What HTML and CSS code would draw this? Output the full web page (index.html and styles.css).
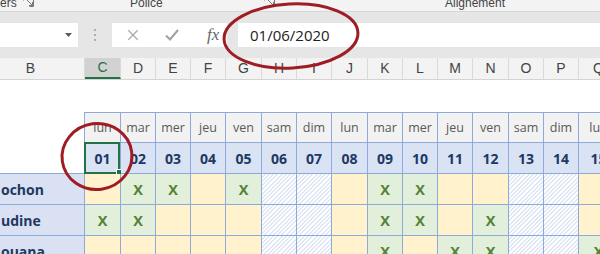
FILE: index.html
```html
<!DOCTYPE html>
<html lang="fr">
<head>
    <meta charset="UTF-8">
    <meta name="viewport" content="width=device-width, initial-scale=1.0">
    <title>Planning - juin 2020</title>
    <link rel="stylesheet" href="styles.css">
</head>
<body>

    <div class="ribbon">
        <span class="rb-label rb-first">ers</span>
        <svg class="launcher" viewBox="0 0 13 13"><path d="M1.5 5.5v-4h10v10h-4M5 5l5.5 5.5M10.5 7v3.5H7" fill="none" stroke="#777" stroke-width="1"/></svg>
        <span class="rb-label rb-police">Police</span>
        <svg class="launcher launcher-2" viewBox="0 0 13 13"><path d="M1.5 5.5v-4h10v10h-4M5 5l5.5 5.5M10.5 7v3.5H7" fill="none" stroke="#777" stroke-width="1"/></svg>
        <span class="rb-label rb-align">Alignement</span>
    </div>

    <div class="formula-bar">
        <div class="name-box">
            <svg class="drop" viewBox="0 0 7 4"><path d="M0 0h7L3.5 4z" fill="#5a5a5a"/></svg>
        </div>
        <div class="grip">
            <span></span><span></span><span></span>
        </div>
        <div class="fx-buttons">
            <svg class="btn-cancel" viewBox="0 0 14 14"><path d="M1.5 1.5l11 11M12.5 1.5l-11 11" stroke="#a8a8a8" stroke-width="1.4" fill="none"/></svg>
            <svg class="btn-enter" viewBox="0 0 14 14"><path d="M1 7.5l4 4L13 2" stroke="#a0a0a0" stroke-width="2" fill="none"/></svg>
            <span class="fx">fx</span>
        </div>
        <div class="formula-input">01/06/2020</div>
    </div>

    <div class="col-heads">
        <div class="col-head col-b">B</div>
        <div class="col-head active">C</div>
        <div class="col-head">D</div>
        <div class="col-head">E</div>
        <div class="col-head">F</div>
        <div class="col-head">G</div>
        <div class="col-head">H</div>
        <div class="col-head">I</div>
        <div class="col-head">J</div>
        <div class="col-head">K</div>
        <div class="col-head">L</div>
        <div class="col-head">M</div>
        <div class="col-head">N</div>
        <div class="col-head">O</div>
        <div class="col-head">P</div>
        <div class="col-head">Q</div>
    </div>

    <div class="sheet">
        <div class="planning">
            <!-- jours -->
            <div class="cell blank"></div>
            <div class="cell day top">lun</div>
            <div class="cell day top">mar</div>
            <div class="cell day top">mer</div>
            <div class="cell day top">jeu</div>
            <div class="cell day top">ven</div>
            <div class="cell day top">sam</div>
            <div class="cell day top">dim</div>
            <div class="cell day top">lun</div>
            <div class="cell day top">mar</div>
            <div class="cell day top">mer</div>
            <div class="cell day top">jeu</div>
            <div class="cell day top">ven</div>
            <div class="cell day top">sam</div>
            <div class="cell day top">dim</div>
            <div class="cell day top">lun</div>

            <!-- dates -->
            <div class="cell blank base"></div>
            <div class="cell num sel">01<span class="handle"></span></div>
            <div class="cell num">02</div>
            <div class="cell num">03</div>
            <div class="cell num">04</div>
            <div class="cell num">05</div>
            <div class="cell num">06</div>
            <div class="cell num">07</div>
            <div class="cell num">08</div>
            <div class="cell num">09</div>
            <div class="cell num">10</div>
            <div class="cell num">11</div>
            <div class="cell num">12</div>
            <div class="cell num">13</div>
            <div class="cell num">14</div>
            <div class="cell num">15</div>

            <div class="cell name">ochon</div>
            <div class="cell no"></div>
            <div class="cell yes">X</div>
            <div class="cell yes">X</div>
            <div class="cell no"></div>
            <div class="cell yes">X</div>
            <div class="cell off"></div>
            <div class="cell off"></div>
            <div class="cell no"></div>
            <div class="cell yes">X</div>
            <div class="cell yes">X</div>
            <div class="cell no"></div>
            <div class="cell no"></div>
            <div class="cell off"></div>
            <div class="cell off"></div>
            <div class="cell no"></div>

            <div class="cell name">udine</div>
            <div class="cell yes">X</div>
            <div class="cell yes">X</div>
            <div class="cell no"></div>
            <div class="cell no"></div>
            <div class="cell no"></div>
            <div class="cell off"></div>
            <div class="cell off"></div>
            <div class="cell no"></div>
            <div class="cell yes">X</div>
            <div class="cell yes">X</div>
            <div class="cell no"></div>
            <div class="cell yes">X</div>
            <div class="cell off"></div>
            <div class="cell off"></div>
            <div class="cell no"></div>

            <div class="cell name">ouana</div>
            <div class="cell no"></div>
            <div class="cell no"></div>
            <div class="cell no"></div>
            <div class="cell no"></div>
            <div class="cell no"></div>
            <div class="cell off"></div>
            <div class="cell off"></div>
            <div class="cell no"></div>
            <div class="cell yes">X</div>
            <div class="cell no"></div>
            <div class="cell yes">X</div>
            <div class="cell yes">X</div>
            <div class="cell off"></div>
            <div class="cell off"></div>
            <div class="cell yes">X</div>
        </div>
    </div>

    <!-- annotations rouges -->
    <svg class="marks" viewBox="0 0 600 254">
        <ellipse cx="291" cy="36" rx="67" ry="32" transform="rotate(-3 291 36)" fill="none" stroke="#9e1d24" stroke-width="3"/>
        <ellipse cx="97" cy="156.5" rx="35" ry="33" transform="rotate(-8 97 156.5)" fill="none" stroke="#9e1d24" stroke-width="3"/>
    </svg>

</body>
</html>
```

FILE: styles.css
```css
:root {
    --cols: 85px 36px 35px 35px 35px 36px 35px 35px 36px 35px 35px 35px 36px 35px 35px 40px;
    --grid-line: #8eaadb;
    --navy: #203864;
    --excel-green: #217346;
    --yellow: #fff2cc;
    --green: #e2efda;
    --label-blue: #d9e1f2;
}

body {
    margin: 0;
    width: 600px;
    height: 254px;
    overflow: hidden;
    position: relative;
    background: #fff;
    font-family: 'Open Sans', sans-serif;
}

/* ruban */
.ribbon {
    height: 11px;
    background: #f3f3f3;
    border-bottom: 1px solid #d6d6d6;
    display: flex;
    overflow: hidden;
    font-family: 'Liberation Sans', sans-serif;
    font-size: 12px;
    line-height: 12px;
    color: #444;
}

.rb-label {
    margin-top: -3px;
    white-space: nowrap;
}

.rb-first {
    width: 22px;
}

.rb-police {
    width: 40px;
    margin-left: 95px;
}

.rb-align {
    margin-left: 169px;
}

.launcher {
    width: 13px;
    height: 13px;
    margin-top: -5px;
    flex-shrink: 0;
}

.launcher-2 {
    margin-left: 93px;
}

/* barre de formule */
.formula-bar {
    height: 46px;
    box-sizing: border-box;
    padding-top: 11px;
    background: #e6e6e6;
    display: flex;
    align-items: flex-start;
}

.name-box {
    width: 78px;
    height: 24px;
    background: #fff;
    display: flex;
    align-items: center;
    justify-content: flex-end;
}

.drop {
    width: 7px;
    height: 4px;
    margin-right: 6px;
}

.grip {
    width: 34px;
    height: 24px;
    display: flex;
    flex-direction: column;
    align-items: center;
    justify-content: center;
    gap: 3px;
}

.grip span {
    width: 2px;
    height: 2px;
    border-radius: 50%;
    background: #9a9a9a;
}

.fx-buttons {
    width: 115px;
    height: 24px;
    background: #fff;
    display: flex;
    align-items: center;
}

.btn-cancel {
    width: 12px;
    height: 12px;
    margin-left: 15px;
}

.btn-enter {
    width: 14px;
    height: 14px;
    margin-left: 26px;
}

.fx {
    margin-left: 28px;
    font-family: 'Liberation Serif', serif;
    font-style: italic;
    font-size: 17px;
    color: #666;
    line-height: 24px;
}

.formula-input {
    flex: 1;
    height: 24px;
    margin-left: 11px;
    padding-left: 12px;
    background: #fff;
    font-size: 15px;
    line-height: 24px;
    color: #222;
}

/* en-têtes de colonnes */
.col-heads {
    display: grid;
    grid-template-columns: var(--cols);
    height: 22px;
    box-sizing: border-box;
    background: #f3f3f3;
    border-bottom: 1px solid #d4d4d4;
}

.col-head {
    border-right: 1px solid #dadada;
    text-align: center;
    font-family: 'Liberation Sans', sans-serif;
    font-size: 14px;
    line-height: 21px;
    color: #444;
}

.col-head.col-b {
    padding-right: 23px;
}

.col-head.active {
    background: #d2d2d2;
    color: var(--excel-green);
    border-bottom: 2px solid var(--excel-green);
    line-height: 19px;
}

/* feuille */
.sheet {
    padding-top: 32px;
}

.planning {
    display: grid;
    grid-template-columns: var(--cols);
    grid-auto-rows: 31px;
}

.cell {
    box-sizing: border-box;
    border-right: 1px solid var(--grid-line);
    border-bottom: 1px solid var(--grid-line);
    display: flex;
    align-items: center;
    justify-content: center;
    white-space: nowrap;
    overflow: hidden;
}

.cell.blank {
    border-bottom: none;
    background: #fff;
}

.cell.blank.base {
    border-bottom: 1px solid var(--grid-line);
}

.cell.top {
    border-top: 1px solid var(--grid-line);
}

.day {
    background: #f2f2f2;
    font-size: 12.5px;
    color: #595959;
}

.num {
    background: #dae3f3;
    font-size: 14px;
    font-weight: bold;
    color: var(--navy);
}

.num.sel {
    position: relative;
    overflow: visible;
}

.num.sel::after {
    content: "";
    position: absolute;
    left: -1px;
    top: -1px;
    right: 0;
    bottom: -1px;
    border: 2px solid var(--excel-green);
}

.handle {
    position: absolute;
    right: -1px;
    bottom: -1px;
    width: 4px;
    height: 4px;
    background: var(--excel-green);
    border-left: 1px solid #fff;
    border-top: 1px solid #fff;
    z-index: 2;
}

.name {
    background: var(--label-blue);
    justify-content: flex-start;
    padding-left: 1px;
    font-size: 14px;
    font-weight: bold;
    color: var(--navy);
}

.no {
    background: var(--yellow);
}

.yes {
    background: var(--green);
    font-size: 14.5px;
    font-weight: bold;
    color: #548235;
}

.off {
    background: repeating-linear-gradient(135deg, #fff 0 1.6px, #dfe6f4 1.6px 3px);
}

.marks {
    position: absolute;
    top: 0;
    left: 0;
    width: 600px;
    height: 254px;
    pointer-events: none;
    z-index: 5;
}
```
